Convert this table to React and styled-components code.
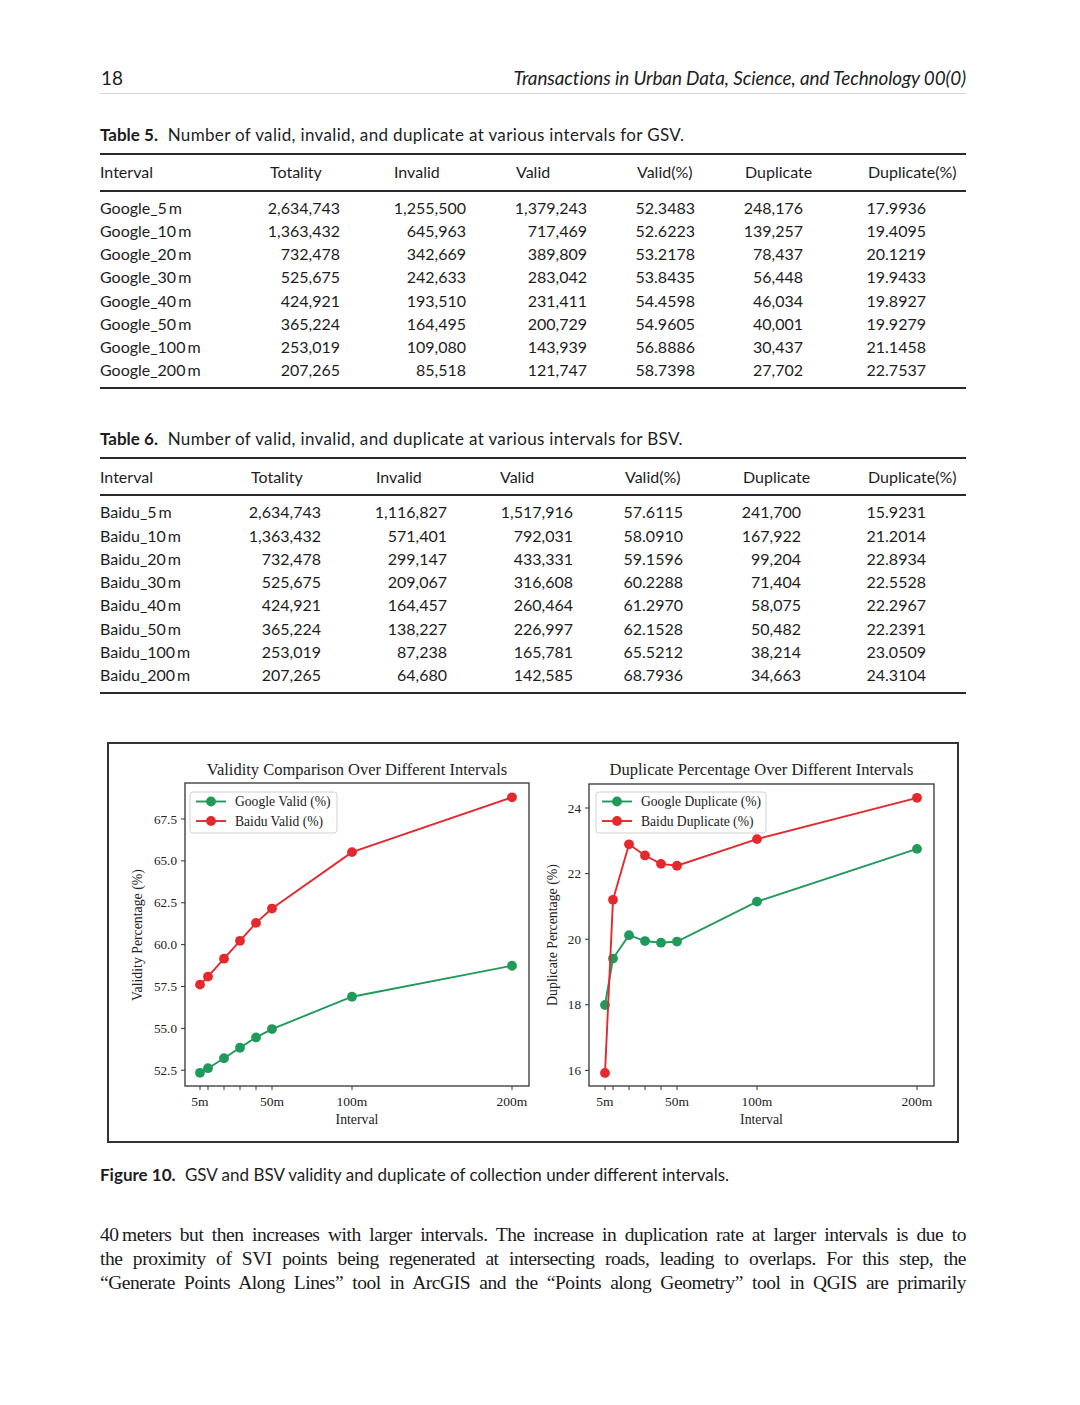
import React from 'react';
import styled, { createGlobalStyle } from 'styled-components';

const GlobalStyle = createGlobalStyle`
  html, body { margin: 0; padding: 0; background: #fff; }
  body { font-family: Lato, "Open Sans", sans-serif; color: #1d1d1d; }
`;

const GREEN = '#1f9a5a';
const RED = '#e4282e';

const gsv = [
  ['Google_5\u2009m', '2,634,743', '1,255,500', '1,379,243', '52.3483', '248,176', '17.9936'],
  ['Google_10\u2009m', '1,363,432', '645,963', '717,469', '52.6223', '139,257', '19.4095'],
  ['Google_20\u2009m', '732,478', '342,669', '389,809', '53.2178', '78,437', '20.1219'],
  ['Google_30\u2009m', '525,675', '242,633', '283,042', '53.8435', '56,448', '19.9433'],
  ['Google_40\u2009m', '424,921', '193,510', '231,411', '54.4598', '46,034', '19.8927'],
  ['Google_50\u2009m', '365,224', '164,495', '200,729', '54.9605', '40,001', '19.9279'],
  ['Google_100\u2009m', '253,019', '109,080', '143,939', '56.8886', '30,437', '21.1458'],
  ['Google_200\u2009m', '207,265', '85,518', '121,747', '58.7398', '27,702', '22.7537'],
];

const bsv = [
  ['Baidu_5\u2009m', '2,634,743', '1,116,827', '1,517,916', '57.6115', '241,700', '15.9231'],
  ['Baidu_10\u2009m', '1,363,432', '571,401', '792,031', '58.0910', '167,922', '21.2014'],
  ['Baidu_20\u2009m', '732,478', '299,147', '433,331', '59.1596', '99,204', '22.8934'],
  ['Baidu_30\u2009m', '525,675', '209,067', '316,608', '60.2288', '71,404', '22.5528'],
  ['Baidu_40\u2009m', '424,921', '164,457', '260,464', '61.2970', '58,075', '22.2967'],
  ['Baidu_50\u2009m', '365,224', '138,227', '226,997', '62.1528', '50,482', '22.2391'],
  ['Baidu_100\u2009m', '253,019', '87,238', '165,781', '65.5212', '38,214', '23.0509'],
  ['Baidu_200\u2009m', '207,265', '64,680', '142,585', '68.7936', '34,663', '24.3104'],
];

const heads = ['Interval', 'Totality', 'Invalid', 'Valid', 'Valid(%)', 'Duplicate', 'Duplicate(%)'];
const intervals = [5, 10, 20, 30, 40, 50, 100, 200];

const Page = styled.div`
  width: 1080px;
  height: 1405px;
  box-sizing: border-box;
  padding: 65px 114px 0 100px;
  background: #fff;
  overflow: hidden;
`;

const RunningHead = styled.header`
  display: flex;
  justify-content: space-between;
  align-items: center;
  font-size: 19px;
  line-height: 26px;
  padding-bottom: 2px;
  border-bottom: 1px solid #d6d6d6;
`;

const Folio = styled.span`
  padding-left: 1px;
`;

const Journal = styled.span`
  font-style: italic;
  font-size: 18.9px;
  letter-spacing: -0.1px;
`;

const Caption = styled.p`
  margin: ${(p) => p.$top}px 0 0;
  font-size: 17px;
  line-height: 22px;
  letter-spacing: ${(p) => p.$ls || 0}px;
  b { font-weight: 700; margin-right: 5px; letter-spacing: 0; }
`;

const Table = styled.div`
  margin-top: ${(p) => p.$top}px;
  border-top: 2px solid #2a2a2a;
  border-bottom: 2px solid #2a2a2a;
`;

const Row = styled.div`
  display: grid;
  grid-template-columns: ${(p) => p.$cols.map((c) => `${c}px`).join(' ')};
  font-size: 16px;
  line-height: ${(p) => p.$lh || 22}px;
`;

const HeadRow = styled(Row)`
  padding: ${(p) => p.$pad[0]}px 0 ${(p) => p.$pad[1]}px;
  border-bottom: 2px solid #2a2a2a;
`;

const Body = styled.div`
  padding: ${(p) => p.$pad[0]}px 0 ${(p) => p.$pad[1]}px;
`;

const Num = styled.span`
  display: flex;
  justify-content: flex-end;
  width: ${(p) => p.$w}px;
  white-space: nowrap;
`;

const Figure = styled.div`
  margin-top: 48px;
  width: 852px;
  margin-left: 7px;
  height: 401px;
  box-sizing: border-box;
  border: 2px solid #333;
  display: flex;
`;

const Plot = styled.svg`
  display: block;
  flex: none;
  font-family: "Liberation Serif", "Times New Roman", serif;
`;

const Prose = styled.div`
  margin-top: 37px;
  font-family: "Liberation Serif", "Times New Roman", serif;
  font-size: 19.5px;
  line-height: 24px;
  letter-spacing: -0.45px;
  color: #1a1a1a;
`;

const Line = styled.div`
  text-align: justify;
  text-align-last: justify;
  white-space: nowrap;
`;

function DataTable({ top, cols, nums, headPad, bodyPad, lh, rows }) {
  return (
    <Table $top={top}>
      <HeadRow $cols={cols} $pad={headPad}>
        {heads.map((h) => (
          <span key={h}>{h}</span>
        ))}
      </HeadRow>
      <Body $pad={bodyPad}>
        {rows.map((r) => (
          <Row key={r[0]} $cols={cols} $lh={lh}>
            <span>{r[0]}</span>
            {r.slice(1).map((v, i) => (
              <Num key={i} $w={nums[i]}>{v}</Num>
            ))}
          </Row>
        ))}
      </Body>
    </Table>
  );
}

function Chart({ ox, w, axes, xOf, yOf, yTicks, tickFmt, title, ylabel, ylabelX, green, red, legend }) {
  const { L, R, T, B } = axes;
  const cx = (L + R) / 2;
  const pts = (vals) => vals.map((v, i) => `${xOf(intervals[i])},${yOf(v)}`).join(' ');
  const labelled = { 5: '5m', 50: '50m', 100: '100m', 200: '200m' };
  return (
    <Plot width={w} height={397} viewBox={`${ox} 744 ${w} 397`}>
      <text x={cx} y={775} fontSize="16.5" textAnchor="middle" fill="#222">{title}</text>
      {yTicks.map((t) => (
        <g key={t}>
          <line x1={L - 4} x2={L} y1={yOf(t)} y2={yOf(t)} stroke="#333" strokeWidth="1" />
          <text x={L - 8} y={yOf(t) + 4.5} fontSize="13.2" textAnchor="end" fill="#222">{tickFmt(t)}</text>
        </g>
      ))}
      {intervals.map((m) => (
        <g key={m}>
          <line x1={xOf(m)} x2={xOf(m)} y1={B} y2={B + 4} stroke="#333" strokeWidth="1" />
          {labelled[m] && (
            <text x={xOf(m)} y={B + 20} fontSize="13.5" textAnchor="middle" fill="#222">{labelled[m]}</text>
          )}
        </g>
      ))}
      <text x={cx} y={B + 38} fontSize="13.8" textAnchor="middle" fill="#222">Interval</text>
      <text
        x={ylabelX}
        y={935}
        fontSize="13.8"
        textAnchor="middle"
        fill="#222"
        transform={`rotate(-90 ${ylabelX} 935)`}
      >
        {ylabel}
      </text>
      {[
        [green, GREEN],
        [red, RED],
      ].map(([vals, c]) => (
        <g key={c}>
          <polyline points={pts(vals)} fill="none" stroke={c} strokeWidth="1.9" />
          {vals.map((v, i) => (
            <circle key={i} cx={xOf(intervals[i])} cy={yOf(v)} r="4.9" fill={c} />
          ))}
        </g>
      ))}
      <rect x={legend.x} y={legend.y} width={legend.w} height={legend.h} rx="3" fill="#fff" fillOpacity="0.85" stroke="#d0d0d0" strokeWidth="1" />
      {legend.items.map((label, i) => {
        const c = i === 0 ? GREEN : RED;
        const ly = legend.y + 9.5 + i * 19.5;
        return (
          <g key={label}>
            <line x1={legend.x + 6} x2={legend.x + 36} y1={ly} y2={ly} stroke={c} strokeWidth="1.9" />
            <circle cx={legend.x + 21} cy={ly} r="4.9" fill={c} />
            <text x={legend.x + 45} y={ly + 4.5} fontSize="13.6" fill="#222">{label}</text>
          </g>
        );
      })}
      <rect x={L} y={T} width={R - L} height={B - T} fill="none" stroke="#333" strokeWidth="1.3" />
    </Plot>
  );
}

export default function App() {
  return (
    <>
      <GlobalStyle />
      <Page>
        <RunningHead>
          <Folio>18</Folio>
          <Journal>Transactions in Urban Data, Science, and Technology 00(0)</Journal>
        </RunningHead>

        <Caption $top={30} $ls={0.35}>
          <b>Table 5.</b> Number of valid, invalid, and duplicate at various intervals for GSV.
        </Caption>
        <DataTable
          top={7}
          cols={[170, 124, 122, 121, 108, 123, 98]}
          nums={[70, 72, 71, 58, 58, 58]}
          headPad={[6, 7]}
          bodyPad={[4, 6]}
          lh={23.15}
          rows={gsv}
        />

        <Caption $top={39} $ls={0.35}>
          <b>Table 6.</b> Number of valid, invalid, and duplicate at various intervals for BSV.
        </Caption>
        <DataTable
          top={7}
          cols={[151, 125, 124, 125, 118, 125, 98]}
          nums={[70, 71, 73, 58, 58, 58]}
          headPad={[7, 6]}
          bodyPad={[4, 6]}
          lh={23.25}
          rows={bsv}
        />

        <Figure>
          <Chart
            ox={109}
            w={426}
            axes={{ L: 185, R: 529, T: 783, B: 1086 }}
            xOf={(m) => 200 + (m - 5) * 1.6}
            yOf={(v) => 819 + (67.5 - v) * 16.75}
            yTicks={[52.5, 55, 57.5, 60, 62.5, 65, 67.5]}
            tickFmt={(t) => t.toFixed(1)}
            title="Validity Comparison Over Different Intervals"
            ylabel="Validity Percentage (%)"
            ylabelX={142}
            green={[52.3483, 52.6223, 53.2178, 53.8435, 54.4598, 54.9605, 56.8886, 58.7398]}
            red={[57.6115, 58.091, 59.1596, 60.2288, 61.297, 62.1528, 65.5212, 68.7936]}
            legend={{ x: 190, y: 792, w: 147, h: 41, items: ['Google Valid (%)', 'Baidu Valid (%)'] }}
          />
          <Chart
            ox={535}
            w={422}
            axes={{ L: 589, R: 934, T: 784, B: 1086 }}
            xOf={(m) => 605 + (m - 5) * 1.6}
            yOf={(v) => 808 + (24 - v) * 32.8}
            yTicks={[16, 18, 20, 22, 24]}
            tickFmt={(t) => String(t)}
            title="Duplicate Percentage Over Different Intervals"
            ylabel="Duplicate Percentage (%)"
            ylabelX={557}
            green={[17.9936, 19.4095, 20.1219, 19.9433, 19.8927, 19.9279, 21.1458, 22.7537]}
            red={[15.9231, 21.2014, 22.8934, 22.5528, 22.2967, 22.2391, 23.0509, 24.3104]}
            legend={{ x: 596, y: 792, w: 170, h: 41, items: ['Google Duplicate (%)', 'Baidu Duplicate (%)'] }}
          />
        </Figure>

        <Caption $top={21}>
          <b>Figure 10.</b> GSV and BSV validity and duplicate of collection under different intervals.
        </Caption>

        <Prose>
          <Line>40&#8201;meters but then increases with larger intervals. The increase in duplication rate at larger intervals is due to</Line>
          <Line>the proximity of SVI points being regenerated at intersecting roads, leading to overlaps. For this step, the</Line>
          <Line>“Generate Points Along Lines” tool in ArcGIS and the “Points along Geometry” tool in QGIS are primarily</Line>
        </Prose>
      </Page>
    </>
  );
}
